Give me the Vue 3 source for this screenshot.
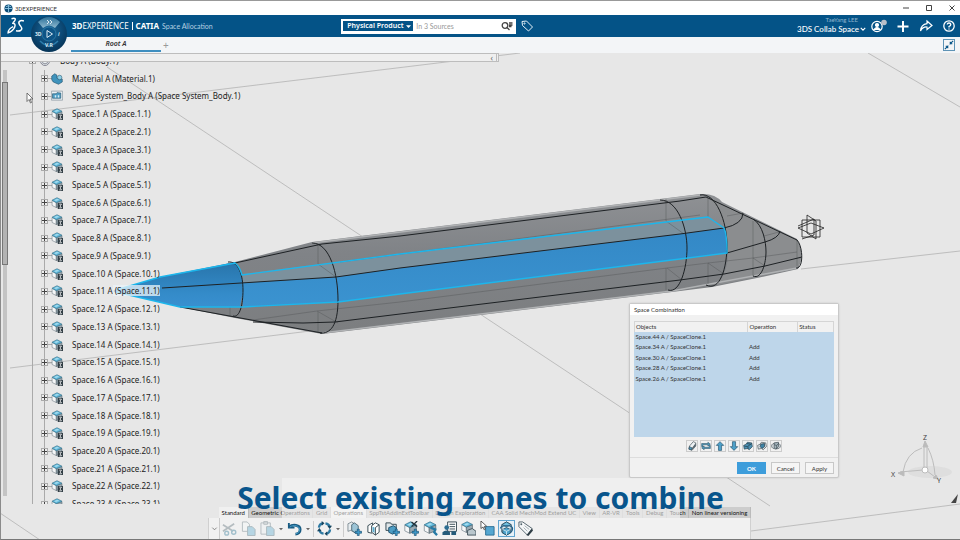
<script setup>
const tree = [
  { label: 'Body A (Body.1)', icon: 'i-body', root: true },
  { label: 'Material A (Material.1)', icon: 'i-material' },
  { label: 'Space System_Body A (Space System_Body.1)', icon: 'i-system' },
  ...Array.from({ length: 23 }, (_, i) => ({
    label: `Space.${i + 1} A`,
    instance: `(Space.${i + 1}.1)`,
    icon: 'i-space',
    lit: i === 10,
  })),
]

const objects = [
  ['Space.44 A / SpaceClone.1', ''],
  ['Space.34 A / SpaceClone.1', 'Add'],
  ['Space.30 A / SpaceClone.1', 'Add'],
  ['Space.28 A / SpaceClone.1', 'Add'],
  ['Space.26 A / SpaceClone.1', 'Add'],
]

const listTools = [
  ['i-erase', 'Remove'], ['i-swap', 'Replace'], ['i-up', 'Move up'], ['i-down', 'Move down'],
  ['i-add', 'Union'], ['i-sub', 'Subtract'], ['i-int', 'Intersect'],
]

const sections = [
  { name: 'Standard', state: 'active' },
  { name: 'Geometric Operations' },
  { name: 'Grid' },
  { name: 'Operations', state: 'active' },
  { name: 'SppTstAddinExtToolbar' },
  { name: 'Design Exploration' },
  { name: 'CAA Solid MechMod Extend UC' },
  { name: 'View' },
  { name: 'AR-VR' },
  { name: 'Tools' },
  { name: 'Debug' },
  { name: 'Touch' },
  { name: 'Non linear versioning' },
]

const editTools = [
  { icon: 'i-cut', name: 'Cut', off: true },
  { icon: 'i-copy', name: 'Copy', off: true },
  { icon: 'i-paste', name: 'Paste', off: true, more: true },
  { icon: 'i-undo', name: 'Undo', more: true },
]
const spaceTools = [
  ['i-slab', 'New space'], ['i-book', 'Space reference'], ['i-folder', 'Import space'],
  ['i-cubecut', 'Split'], ['i-cubeadd', 'Combine'], ['i-list', 'Report'],
  ['i-cubes', 'Group'], ['i-select', 'Select'], ['i-ring', 'Visualize'], ['i-tag', 'Annotate'],
]
</script>

<template>
  <div class="app">
    <svg class="sprite" aria-hidden="true">
      <symbol id="i-cube" viewBox="0 0 16 16">
        <path d="M1 5 7 8v7L1 12z" fill="#f5f7f8" stroke="#6b7a83" stroke-width=".8" />
        <path d="M7 8 15 5v7L7 15z" fill="#9aaab3" stroke="#4a5a64" stroke-width=".8" />
        <path d="M1 4.500 8 1 15 4.500 7 8z" fill="#64bbdd" stroke="#286581" stroke-width=".8" />
        <path d="M4 4.500 8 2.500l3 1.300-4.500 2z" fill="#a5dcee" />
      </symbol>
      <symbol id="i-plus" viewBox="0 0 8 8">
        <path d="M3 .5h2V3h2.500v2H5v2.500H3V5H.5V3H3z" fill="#3f9bcb" stroke="#174e70" stroke-width=".7" />
      </symbol>
      <symbol id="i-space" viewBox="0 0 16 16">
        <use href="#i-cube" width="16" height="15" />
        <path d="M9 8h7v8H9z" fill="#333f46" />
        <path d="M11 9.500h3l-2 2.500 2 2.500h-3" fill="none" stroke="#fff" />
      </symbol>
      <symbol id="i-body" viewBox="0 0 16 16">
        <circle cx="8" cy="8" r="6" fill="#e9eef0" stroke="#667" />
        <path d="M4 10q4 4 8 0" fill="none" stroke="#667" />
      </symbol>
      <symbol id="i-material" viewBox="0 0 16 16">
        <path d="M1 4 5 1l3 2v4l4 2 3-1v4l-5 3-7-3-2-3z" fill="#3f93bc" stroke="#204f6a" stroke-width=".8" />
        <circle cx="11.500" cy="6" r="3" fill="#8ccfe6" stroke="#204f6a" stroke-width=".7" />
      </symbol>
      <symbol id="i-system" viewBox="0 0 16 16">
        <path d="M.5 1.500h15v12H.5z" fill="#e8eff3" stroke="#8895a0" />
        <path d="M2 5h5l1-1.500 5 .5v7H2z" fill="#4d9dc4" stroke="#204f6a" stroke-width=".8" />
        <path d="M5 7h2v3H5zM9 7h2v3H9z" fill="#d7eef7" />
      </symbol>
      <symbol id="i-erase" viewBox="0 0 16 16">
        <path d="m4 8 6-7 4 2v5l-6 7-5-2z" fill="#eef2f4" stroke="#38464e" />
        <path d="m4 9 4 2v3l-5-1z" fill="#4d9cc2" stroke="#263e4c" />
        <path d="m8 11 6-8v5l-6 6z" fill="#56646c" />
      </symbol>
      <symbol id="i-swap" viewBox="0 0 16 16">
        <path d="M1 9V4h10V2l4 3-4 3V6H3v3zM15 7v5H5v2l-4-3 4-3v2h8V7z" fill="#4d9cc2" stroke="#27485a" stroke-width=".8" />
      </symbol>
      <symbol id="i-up" viewBox="0 0 16 16">
        <path d="m8 1 6 6h-3.500v8h-5V7H2z" fill="#4da0c9" stroke="#214d66" />
      </symbol>
      <symbol id="i-down" viewBox="0 0 16 16">
        <path d="m8 15 6-6h-3.500V1h-5v8H2z" fill="#4da0c9" stroke="#214d66" />
      </symbol>
      <symbol id="i-add" viewBox="0 0 16 16">
        <path d="m1 7 4-2 2-3 7 1 1 6-5 5-3-2-5 1z" fill="#4c8fb1" stroke="#263e4c" />
        <path d="m2 8 5 1 7-5M8 9v4M6 4l6 1" fill="none" stroke="#1e3440" />
      </symbol>
      <symbol id="i-sub" viewBox="0 0 16 16">
        <path d="m1 7 4-2 2-3 7 1 1 6-5 5-3-2-5 1z" fill="#d9dfe2" stroke="#38464e" />
        <path d="m6 5 6-1v5l-4 3-3-3z" fill="#3f84a6" stroke="#1e3440" />
      </symbol>
      <symbol id="i-int" viewBox="0 0 16 16">
        <ellipse cx="8" cy="8" rx="7" ry="4.500" fill="#dce1e4" stroke="#38464e" />
        <path d="m5 3 7-1v7l-4 4-3-2z" fill="#a2b2ba" stroke="#38464e" />
        <path d="m5 6 4 1 3-3M9 7v6" fill="none" stroke="#38464e" />
      </symbol>
      <symbol id="i-cut" viewBox="0 0 16 16">
        <path d="m1 4 11 7M1 11 13 3" stroke="#8d9aa0" stroke-width="1.800" />
        <circle cx="12.500" cy="12" r="2.200" fill="none" stroke="#6fa0b5" stroke-width="1.500" />
        <circle cx="5" cy="13" r="2" fill="none" stroke="#6fa0b5" stroke-width="1.500" />
      </symbol>
      <symbol id="i-copy" viewBox="0 0 16 16">
        <path d="M1.500 1h5L9 3.500V11H1.500z" fill="#f3f6f7" stroke="#8d9aa0" />
        <path d="M7 6h5l3 3v6.500H7z" fill="#8fc3da" stroke="#7e959f" />
      </symbol>
      <symbol id="i-paste" viewBox="0 0 16 16">
        <path d="M1 2h10v12H1zM4 .5h4v3H4z" fill="#edf0f1" stroke="#8d9aa0" />
        <path d="M7 6h5l3 3v6.500H7z" fill="#8fc3da" stroke="#7e959f" />
      </symbol>
      <symbol id="i-undo" viewBox="0 0 16 16">
        <path d="M2 2v5h6" fill="none" stroke="#195b82" stroke-width="2" />
        <path d="M2.500 6.500C6 3 14 4 14 9c0 3-2 5-5 5" fill="none" stroke="#195b82" stroke-width="3" />
        <path d="M3 6.500C7 3.500 13.500 5 13.500 9c0 2.500-2 4.500-4 4.500" fill="none" stroke="#4aa2cf" />
      </symbol>
      <symbol id="i-update" viewBox="0 0 16 16">
        <path d="M2 7Q2.500 3 6 2.500M14 9q-.5 4-4 4.500M9 2.500q4 .5 4.500 4M7 13.500q-4-.5-4.500-4" fill="none" stroke="#2f7ba4" stroke-width="2.400" />
        <path d="M5 0v5l3-2.500zM16 5h-5l2.500 3.500zM11 16v-5l-3 2.500zM0 11h5L2.500 7.500z" fill="#17455f" />
      </symbol>
      <symbol id="i-slab" viewBox="0 0 16 16">
        <path d="m1 3 4-2 3 2v9l-4-2-3 1z" fill="#e6ecef" stroke="#6b7a83" stroke-width=".8" />
        <path d="m5 4 3-2 4 3v8H9l-4-3z" fill="#9cc4d6" stroke="#33505f" stroke-width=".8" />
        <use href="#i-plus" x="8" y="8" width="8" height="8" />
      </symbol>
      <symbol id="i-book" viewBox="0 0 16 16">
        <path d="m2 5 5-3v9l-1 2-4-1z" fill="#fff" stroke="#344750" />
        <path d="m6 5 4-3 4 2v8l-4 3-4-3z" fill="#fff" stroke="#344750" />
        <path d="m7 6 2 1v6l-2-2z" fill="#58acd0" />
        <path d="M10 15V7l4-3" fill="none" stroke="#344750" />
      </symbol>
      <symbol id="i-folder" viewBox="0 0 16 16">
        <path d="M1 2h5l1 1.500h5V10H1z" fill="#dfe6e9" stroke="#344750" />
        <path d="m4 7 5-2 3 2v5l-4 2-4-2z" fill="#4d9dc4" stroke="#204f6a" />
        <use href="#i-plus" x="8" y="8" width="8" height="8" />
      </symbol>
      <symbol id="i-cubecut" viewBox="0 0 16 16">
        <use href="#i-cube" width="14" height="14" />
        <path d="m8 1 6 5M14 0 8 6" stroke="#26343c" stroke-width="1.400" />
        <use href="#i-plus" x="8" y="8" width="8" height="8" />
      </symbol>
      <symbol id="i-cubeadd" viewBox="0 0 16 16">
        <use href="#i-cube" width="15" height="14" />
        <path d="m8 7 5 2-1 3 3 3" fill="none" stroke="#267aa5" stroke-width="2.500" />
      </symbol>
      <symbol id="i-list" viewBox="0 0 16 16">
        <path d="M6 1h9.500v10H6z" fill="#fff" stroke="#344750" />
        <path d="M8 3.500h6M8 6h6M8 8.500h6" stroke="#344750" />
        <circle cx="5" cy="7" r="2.500" fill="#2d6e92" />
        <path d="M.5 15v-3q4-4 8 0v3zM10 11h5v4h-5z" fill="#255b7a" />
      </symbol>
      <symbol id="i-cubes" viewBox="0 0 16 16">
        <use href="#i-cube" width="13" height="13" />
        <path d="m7 10 5-2 4 3v4H7z" fill="#b9c6cc" stroke="#43545d" />
      </symbol>
      <symbol id="i-select" viewBox="0 0 16 16">
        <path d="M6 6h9v9H6z" fill="#55a7d1" stroke="#2b6f95" />
        <path d="m1 0 6 5.500-2.500.3 1.300 3-1.300.6-1.300-3L1 8z" fill="#fff" stroke="#333" stroke-width=".8" />
      </symbol>
      <symbol id="i-ring" viewBox="0 0 16 16">
        <path d="m3 4 5-3 5 3v8l-5 3-5-3z" fill="#dcebf2" stroke="#2b4b5c" />
        <path d="m3 4 5 2 5-2-5-3z" fill="#6fbfdf" stroke="#2b4b5c" stroke-width=".8" />
        <path d="M1.500 8q0-3 6.500-3t6.500 3-2 4" fill="none" stroke="#1b5f88" stroke-width="1.200" />
        <path d="m4 9 4-2 4 2v4l-4 2-4-2z" fill="#4fa5cd" stroke="#1f475c" stroke-width=".8" />
        <path d="m4 9 4 2 4-2M8 11v4" fill="none" stroke="#e5f2f8" stroke-width=".8" />
      </symbol>
      <symbol id="i-tag" viewBox="0 0 16 16">
        <path d="M1 1h4l10 7-5 7-9-9z" fill="#f6f8f9" stroke="#50616b" />
        <circle cx="3.500" cy="3.500" r="1" fill="#50616b" />
        <path d="m9 15 6-7 1 2-5 6z" fill="#2f3e46" />
        <path d="m7 5 5 4M6 7l4 4" stroke="#8a989f" stroke-width=".8" />
      </symbol>
      <symbol id="i-caret" viewBox="0 0 8 8"><path d="M0 2h8L4 6.500z" fill="currentColor" /></symbol>
    </svg>

    <div class="titlebar">
      <svg class="appicon" viewBox="0 0 10 10"><circle cx="5" cy="5" r="4.500" fill="#0d4d78" /><path d="M2 3q3-2 6 0M5 1v8M1 5h8" stroke="#8cc4e2" fill="none" /></svg>
      <span>3DEXPERIENCE</span>
      <div class="winbtns">
        <button aria-label="Minimize"><svg viewBox="0 0 8 8"><path d="M1 4h6" /></svg></button>
        <button aria-label="Maximize"><svg viewBox="0 0 8 8"><path d="M1.500 1.500h5v5h-5z" /></svg></button>
        <button aria-label="Close"><svg viewBox="0 0 8 8"><path d="m1.500 1.500 5 5m0-5-5 5" /></svg></button>
      </div>
    </div>

    <header class="topbar">
      <svg class="ds" viewBox="0 0 16 16" fill="none" stroke="#fff" stroke-width="1.300">
        <path d="M4 1.500C7 .5 9 1.500 5.500 5" />
        <path d="M4.500 5.500C9.500 5 7 12 1 14c0-2 2-4.500 4.500-5.500" />
        <path d="M15 3.500c-3-1-5.500.5-4 3s3.500 4 1 5.500c-1 .6-2.500.5-4 .2" />
      </svg>
      <svg class="compass" viewBox="0 0 38 38">
        <defs>
          <radialGradient id="ball" cx=".5" cy=".4" r=".6"><stop offset="0" stop-color="#1f6c9c" /><stop offset=".6" stop-color="#0c4a77" /><stop offset="1" stop-color="#063457" /></radialGradient>
          <linearGradient id="cap" x1="0" y1="0" x2="0" y2="1"><stop offset="0" stop-color="#2b7099" /><stop offset="1" stop-color="#8eb9cf" /></linearGradient>
        </defs>
        <circle cx="19" cy="19" r="18" fill="url(#ball)" />
        <path d="M8 7Q19-3 30 7L25 13Q19 8 13 13z" fill="url(#cap)" />
        <circle cx="19" cy="19" r="7" fill="#0d5486" stroke="#2f7eac" stroke-width=".8" />
        <path d="m17 15.500 5.500 3.500-5.500 3.500z" fill="none" stroke="#dbeaf3" />
        <path d="M10 26q9 9 18 0" fill="none" stroke="#2c7cab" stroke-width="1.500" />
        <path d="m17 5 2 2-2 2m3-4 2 2-2 2" fill="none" stroke="#dbeaf3" />
        <text x="5" y="21" class="glyph">3D</text><text x="28" y="21" class="glyph slant">i</text><text x="15" y="32" class="glyph">V.R</text>
      </svg>
      <h1 class="brand"><span><b>3D</b>EXPERIENCE</span><i></i><b>CATIA</b><small>Space Allocation</small></h1>
      <form class="search" @submit.prevent>
        <label class="source">
          <select aria-label="Object type"><option>Physical Product</option></select>
          <svg viewBox="0 0 8 8"><use href="#i-caret" /></svg>
        </label>
        <input type="text" aria-label="Search" placeholder="In 3 Sources" />
        <button aria-label="Search"><svg viewBox="0 0 12 10" fill="none" stroke="#444" stroke-width="1.300"><circle cx="4" cy="4.500" r="2.800" /><path d="m6 6.500 2.500 2.500M8 2h3.500M8 4h3.500M8 5.500h2.500" /></svg></button>
      </form>
      <button class="tagbtn" aria-label="Tags"><svg viewBox="0 0 12 12" fill="none" stroke="#e4f0f7"><path d="M1 1.500 5.500 1l6 6-4 4-6-5.500z" /><circle cx="3.500" cy="3.500" r=".6" /></svg></button>
      <div class="user">
        <span>TaeYang LEE</span>
        <button>3DS Collab Space <svg viewBox="0 0 8 8" fill="none" stroke="#fff" stroke-width="1.500"><path d="m1 2.500 3 3 3-3" /></svg></button>
      </div>
      <div class="actions">
        <button aria-label="Profile"><svg viewBox="0 0 16 14" fill="none" stroke="#fff" stroke-width="1.200"><circle cx="6" cy="7.500" r="5.200" /><circle cx="6" cy="6" r="1.500" fill="#fff" /><path d="M3 10.500q3-4 6 0z" fill="#fff" /><circle cx="13" cy="3.500" r="2.800" fill="#b9bfc8" stroke="none" /></svg></button>
        <button aria-label="Add"><svg viewBox="0 0 14 14" stroke="#fff" stroke-width="2"><path d="M7 2v11M1.500 7.500h11" /></svg></button>
        <button aria-label="Share"><svg viewBox="0 0 14 14" fill="none" stroke="#fff" stroke-width="1.200"><path d="m8 2 5 4.500-5 4V8Q4 7.500 1.500 12 2 5.500 8 4.700z" /></svg></button>
        <button aria-label="Help"><svg viewBox="0 0 14 14" fill="none" stroke="#fff" stroke-width="1.300"><circle cx="7" cy="7" r="5.200" /><path d="M5.200 5.500q.2-1.500 1.800-1.500t1.800 1.400Q8.800 6.500 7 7.500v1M7 9.500v1" /></svg></button>
      </div>
    </header>

    <nav class="tabs">
      <button class="tab">Root A</button>
      <button class="newtab" aria-label="New tab">+</button>
      <button class="shrink" aria-label="Exit full view"><svg viewBox="0 0 12 12"><path d="M11 1 7.500 4.500V2M7.500 4.500H10M1 11l3.500-3.500V10M4.500 7.500H2" fill="none" stroke="#075487" stroke-width="1.300" /></svg></button>
    </nav>

    <main class="work">
      <svg class="scene" viewBox="0 53 960 487" preserveAspectRatio="xMidYMin slice">
        <defs>
          <linearGradient id="hull" x1="0" y1="0" x2=".1" y2="1"><stop offset="0" stop-color="#929497" /><stop offset=".45" stop-color="#808387" /><stop offset="1" stop-color="#7c7e80" /></linearGradient>
          <linearGradient id="zone" x1="0" y1="0" x2="0" y2="1"><stop offset="0" stop-color="#3388c6" /><stop offset="1" stop-color="#3b93d0" /></linearGradient>
          <linearGradient id="cone" x1="0" y1="0" x2="0" y2="1"><stop offset="0" stop-color="#2874aa" /><stop offset=".7" stop-color="#348bc9" /><stop offset="1" stop-color="#3990d0" /></linearGradient>
        </defs>
        <path class="ground" d="M107 67 363 237M480 314 770 506M10 115 520 53M10 368 310 331M801 269 960 251M868 53 960 107M0 513 40 540M751 531 960 504" />
        <path d="M113 291 235 262 312 242 700 194Q715 193 722 202L797 239Q805 254 798 269L757 278 712 287 672 292 322 334 235 318 180 307z" fill="url(#hull)" />
        <path d="M708 197Q722 210 727 242T712 286L757 277 798 268Q805 254 797 240z" fill="#8b8d8f" />
        <path d="M312 243 700 195M322 333 672 291 797 268" fill="none" stroke="#b0b2b4" stroke-width="1.500" />
        <path d="M243 274 400 254 708 217 724 228 680 234 400 268 336 277 241 283z" fill="#7c919d" />
        <path d="M241 283 336 277 400 268 680 234 724 228Q727 234 727 253L680 259 400 294 338 302 243 307z" fill="url(#zone)" />
        <path d="M113 291 160 277 235 262Q244 274 243 290L240 307H180z" fill="url(#cone)" />
        <path class="faint" d="M318 244V264M318 312V333M666 199V221M666 268V290M708 198V217M708 263V284M753 221V276M797 240V266M230 307V316M253 320 317 311 400 302 667 268 708 263 753 258 797 252M317 311 338 323M667 268 682 280M708 263 724 274M753 258 765 266M318 264 336 277M666 221 684 234M340 262 700 215M727 216 743 213M764 236 779 232" />
        <path class="edge" d="M235 263 322 244 400 236 680 201 706 197 797 240M162 288 241 283 336 277 400 268 680 234 724 228Q743 224 743 213M727 253 765 242Q779 238 780 231M180 307 235 317 322 333M253 322 303 323 335 322 400 314 680 280 724 274 765 266 802 257" />
        <path class="edge" d="M228 262C239 261 243 276 243 290S240 318 233 316M312 243C330 243 338 274 338 300S330 334 320 333M660 200C678 200 687 228 687 248S680 294 668 290M700 195C716 192 727 222 727 245S720 292 706 285M753 219C763 225 766 242 766 252S762 280 753 276M797 240C803 246 804 269 796 268" />
        <path class="glow" d="M116 290 160 277 235 263Q240 267 242 275L400 254 708 217 724 228Q727 234 727 253L680 259 400 294 338 302 243 307H180L116 292" />
        <path class="axes" d="M802 220h18v17h-18zM798 226l16-7v16l-12 4M807 215l9 6v18l-9-6zM798 228l13-5 13 5-13 6z" />
        <g class="robot">
          <ellipse cx="930" cy="472" rx="22" ry="6" fill="#dedede" stroke="none" />
          <path d="M903 472Q906 453 922 448M928 448Q934 460 935 475M924 469V446h3v23M900 472l23-2M927 471l8 6" />
          <path d="m925 441 3 6h-5zM898 473l6-2v5zM938 479l-5-1 3-3z" fill="#bbb" />
          <circle cx="925" cy="470" r="3" fill="#fff" />
          <text x="923" y="440">Z</text><text x="891" y="477">X</text><text x="937" y="483">Y</text>
        </g>
        <path d="m951 503 7-9-2 9z" fill="#444" />
      </svg>

      <aside class="side">
        <div class="strip"><span>‹</span></div>
        <div class="treebox">
          <div class="scroll"><span class="thumb"></span></div>
          <ul class="tree">
            <li v-for="n in tree" :key="n.label" :class="{ root: n.root }">
              <button class="exp" :aria-label="'Expand ' + n.label"></button>
              <svg><use :href="'#' + n.icon" /></svg>
              <span>{{ n.label }}<span v-if="n.instance" :class="{ lit: n.lit }">&nbsp;{{ n.instance }}</span></span>
            </li>
          </ul>
        </div>
      </aside>

      <svg class="pointer" viewBox="0 0 8 12"><path d="M1 1v8.500l2-2 1.500 3.500 1-.5L4.200 7H7z" fill="#fff" stroke="#555" stroke-width=".8" /></svg>

      <section class="dialog" aria-label="Space Combination">
        <h2>Space Combination</h2>
        <div class="body">
          <div class="grid">
            <table>
              <thead><tr><th>Objects</th><th>Operation</th><th>Status</th></tr></thead>
              <tbody><tr v-for="o in objects" :key="o[0]"><td>{{ o[0] }}</td><td>{{ o[1] }}</td><td></td></tr></tbody>
            </table>
          </div>
          <div class="listtools">
            <button v-for="t in listTools" :key="t[0]" :aria-label="t[1]"><svg><use :href="'#' + t[0]" /></svg></button>
          </div>
        </div>
        <footer><button class="ok">OK</button><button>Cancel</button><button>Apply</button></footer>
      </section>

      <div class="actionbar">
        <div class="sections">
          <button v-for="s in sections" :key="s.name" :class="s.state">{{ s.name }}</button>
        </div>
        <div class="tools">
          <button class="fold" aria-label="Collapse"><svg viewBox="0 0 8 8" fill="none" stroke="#777"><path d="m1.500 3 2.500 2.500L6.500 3" /></svg></button>
          <template v-for="t in editTools" :key="t.name">
            <button class="tool" :class="{ off: t.off }" :aria-label="t.name"><svg><use :href="'#' + t.icon" /></svg></button>
            <svg v-if="t.more" class="more"><use href="#i-caret" /></svg>
          </template>
          <i class="sep"></i>
          <button class="tool" aria-label="Update"><svg><use href="#i-update" /></svg></button>
          <svg class="more"><use href="#i-caret" /></svg>
          <i class="sep"></i>
          <button v-for="t in spaceTools" :key="t[0]" class="tool" :class="{ on: t[0] === 'i-ring' }" :aria-label="t[1]"><svg><use :href="'#' + t[0]" /></svg></button>
        </div>
      </div>

      <p class="caption"><span>Select existing zones to combine</span></p>
    </main>
  </div>
</template>

<style>
body { margin: 0; }
</style>

<style scoped>
.app { min-height: 100vh; box-sizing: border-box; display: flex; flex-direction: column; border-top: 1px solid #999; border-left: 1px solid #8b8b8b; border-bottom: 1px solid #777; background: #e7e7e7; font-family: "Noto Sans", "Open Sans", sans-serif; color: #333; overflow: hidden; }
.sprite { position: absolute; width: 0; height: 0; }
button { border: 0; padding: 0; background: none; font: inherit; color: inherit; display: flex; align-items: center; justify-content: center; }
svg { display: block; flex: none; }

.titlebar { height: 14px; display: flex; align-items: center; gap: 2px; padding: 0 4px 0 3px; background: #fff; font-size: 6px; font-family: Roboto, sans-serif; }
.appicon { width: 9px; height: 9px; }
.winbtns { margin-left: auto; display: flex; gap: 15px; }
.winbtns svg { width: 8px; height: 8px; fill: none; stroke: #444; stroke-width: 1; }

.topbar { position: relative; z-index: 2; height: 22px; display: flex; align-items: center; background: #045387; color: #fff; }
.ds { width: 18px; height: 18px; margin-left: 6px; }
.compass { position: absolute; left: 29px; top: 0; width: 38px; height: 38px; }
.glyph { font-size: 5px; font-weight: 700; fill: #dbeaf3; }
.slant { font-style: italic; }
.brand { margin: 0 0 0 47px; display: flex; align-items: center; gap: 3px; font-size: 8px; font-weight: 400; line-height: 10px; flex: 17 1 0; white-space: nowrap; }
.brand i { width: 1px; height: 8px; background: #fff; }
.brand small { font: 7px/10px Lato, sans-serif; color: #b5d0e2; }
.search { flex: 0 0 175px; min-width: 0; height: 15px; display: flex; align-items: center; background: #fff; }
.source { flex: none; display: flex; align-items: center; height: 10px; margin-left: 2px; width: 70px; background: #045387; }
.source select { appearance: none; border: 0; padding: 0 0 0 4px; margin: 0; width: 63px; height: 10px; background: none; color: #fff; font: 600 7px/10px "Noto Sans", sans-serif; }
.source svg { width: 5px; height: 5px; }
.search input { flex: 1; width: 0; min-width: 0; border: 0; padding: 0 3px; background: none; font: 7px/10px Lato, sans-serif; outline: 0; }
.search input::placeholder { color: #999; }
.search button { margin-right: 3px; }
.search button svg { width: 12px; height: 10px; }
.tagbtn { margin-left: 5px; }
.tagbtn svg { width: 12px; height: 12px; }
.user { flex: 21 1 0; display: flex; flex-direction: column; align-items: flex-end; font: 8px/12px Lato, sans-serif; }
.user span { font-size: 6px; line-height: 6px; color: #8fb5cd; padding-right: 8px; }
.user button { gap: 1px; font-weight: 500; }
.user button svg { width: 6px; height: 6px; }
.actions { display: flex; gap: 9px; padding: 0 4px 0 5px; }
.actions svg { width: 14px; height: 14px; }
.actions button:first-child svg { width: 16px; }

.tabs { height: 16px; display: flex; align-items: center; background: #f3f5f7; padding: 0 5px 0 70px; }
.tab { align-self: stretch; width: 90px; border-bottom: 2px solid #3f8fc0; margin-bottom: 1px; font-size: 7px; font-weight: 600; font-style: italic; }
.newtab { margin-left: 2px; font-size: 10px; line-height: 12px; color: #999; }
.shrink { margin-left: auto; width: 12px; height: 12px; border: 1px solid #5e93b5; }
.shrink svg { width: 10px; height: 10px; }

.work { position: relative; flex: 1; display: flex; min-height: 486px; }
.scene { position: absolute; left: -1px; top: 0; width: calc(100% + 1px); height: calc(100% + 1px); }
.ground { fill: none; stroke: #b2b2b2; stroke-width: .8; }
.faint { fill: none; stroke: #55585a; stroke-width: .7; opacity: .65; }
.edge { fill: none; stroke: #1d2124; stroke-width: 1; }
.glow { fill: none; stroke: #1cb6ec; stroke-width: 1.4; stroke-linejoin: round; }
.axes { fill: none; stroke: #222; stroke-width: .8; }
.robot { fill: none; stroke: #bcbcbc; }
.robot text { font-size: 7px; fill: #444; stroke: none; }

.side { position: relative; width: 498px; display: flex; flex-direction: column; }
.strip { box-sizing: border-box; height: 9px; border: 1px solid #bdbdbd; border-width: 1px 3px 1px 0; border-right-style: double; background: #efefef; display: flex; justify-content: flex-end; align-items: center; padding-right: 3px; font-size: 8px; line-height: 6px; color: #666; }
.treebox { height: 442px; display: flex; overflow: hidden; }
.scroll { width: 4px; margin: 8px 0 8px 2px; background: #c4c4c4; display: flex; flex-direction: column; }
.thumb { box-sizing: border-box; height: 43%; margin: 12px -1px 0; border: 1px solid #777; background: #b3b3b3; }
.tree { position: relative; list-style: none; margin: -10px 0 0 25px; padding: 0 0 0 8px; height: 461px; border-left: 1px solid #aaa; display: flex; flex-direction: column; font-size: 8px; line-height: 12px; white-space: nowrap; color: #222; }
.tree li { flex: 1; display: flex; align-items: center; background: linear-gradient(#aaa, #aaa) 3px 0 / 1px 100% no-repeat, linear-gradient(#aaa, #aaa) 4px 50% / 8px 1px no-repeat; }
.tree li.root { margin-left: -12px; background: none; }
.exp { box-sizing: border-box; width: 7px; height: 7px; border: 1px solid #aaa; background: linear-gradient(#444, #444) center / 5px 1px no-repeat, linear-gradient(#444, #444) center / 1px 5px no-repeat, #eee; }
.tree svg { width: 12px; height: 12px; margin: 0 9px 0 3px; }
.lit { background: rgba(235, 243, 248, .75); }

.pointer { position: absolute; left: 25px; top: 39px; width: 8px; height: 12px; }

.dialog { position: absolute; right: 121px; top: 250px; width: 210px; box-sizing: border-box; border: 1px solid #c9c9c9; border-radius: 2px; background: #f1f1f1; box-shadow: 0 0 2px rgba(0, 0, 0, .15); font-family: Lato, sans-serif; font-size: 6px; color: #333; }
.dialog h2 { margin: 0; padding: 0 4px; background: #fff; font-size: 6px; font-weight: 400; line-height: 11px; }
.body { padding: 6px 4px 5px; }
.grid { height: 116px; background: #bed6ea; }
table { width: 100%; height: 63px; border-collapse: collapse; table-layout: fixed; line-height: 8px; }
th, td { padding: 0 1px; text-align: left; font-weight: 400; white-space: nowrap; }
th { height: 10px; background: #f1f1f1; border: 1px solid #d5d5d5; border-width: 1px 1px 0; box-sizing: border-box; }
th:nth-child(1) { width: 57%; }
th:nth-child(2) { width: 25%; }
.listtools { display: flex; justify-content: center; gap: 2px; padding-top: 3px; }
.listtools button { box-sizing: border-box; width: 12px; height: 12px; border: 1px solid #ccc; }
.listtools svg { width: 10px; height: 10px; }
.dialog footer { display: flex; justify-content: flex-end; gap: 5px; padding: 4px 4px 3px; border-top: 1px solid #ddd; }
.dialog footer button { box-sizing: border-box; width: 29px; height: 12px; border: 1px solid #c8c8c8; background: #f5f5f5; }
.dialog footer .ok { background: #3d9ddb; border-color: #3d9ddb; color: #fff; font-weight: 700; }

.actionbar { position: absolute; left: 207px; bottom: 0; width: 543px; }
.sections { display: flex; margin-left: 11px; height: 11px; background: #cdcdcd; font: 6px/10px Lato, sans-serif; color: #111; }
.sections button { flex: 1 1 auto; border-right: 1px solid #bbb; white-space: nowrap; }
.sections .active { background: #f0f0f0; }
.tools { height: 21px; display: flex; align-items: center; background: #f1f1f1; border: 1px solid #d0d0d0; border-width: 0 1px; }
.fold { width: 11px; align-self: stretch; border-right: 1px solid #ccc; }
.fold svg { width: 7px; height: 7px; }
.tool { box-sizing: border-box; width: 17px; height: 17px; margin: 0 1px; border: 1px solid transparent; }
.tool svg { width: 15px; height: 15px; }
.tool.off { opacity: .6; }
.tool.on { border-color: #62a5cf; background: #e6f1f8; }
.more { width: 4px; height: 4px; margin: 0 2px; color: #666; }
.sep { width: 1px; height: 16px; margin: 0 1px; background: #ccc; }

.caption { position: absolute; left: 0; right: 0; bottom: 21px; height: 40px; margin: 0; display: flex; justify-content: center; pointer-events: none; color: #08558c; font-size: 30px; font-weight: 700; line-height: 40px; white-space: nowrap; }
.caption span { width: 398px; display: flex; justify-content: center; background: rgba(245, 245, 245, .6); }
</style>
